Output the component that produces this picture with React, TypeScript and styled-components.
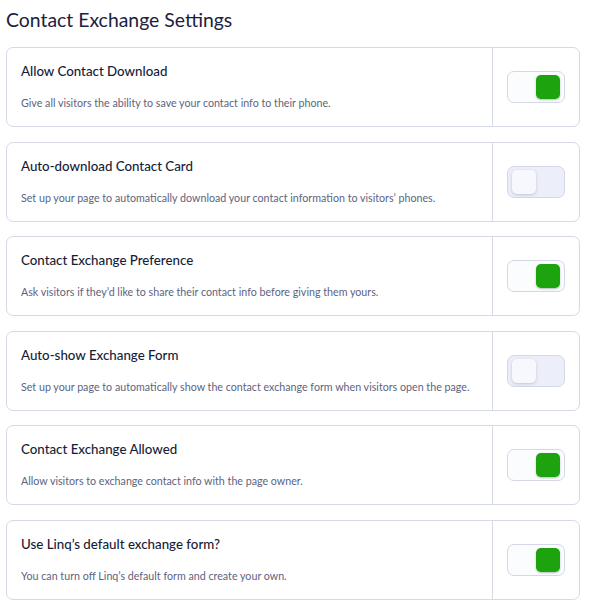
import React from 'react';
import styled, { createGlobalStyle } from 'styled-components';

const settings = [
  {
    id: 1,
    title: 'Allow Contact Download',
    description: 'Give all visitors the ability to save your contact info to their phone.',
    enabled: true,
  },
  {
    id: 2,
    title: 'Auto-download Contact Card',
    description: 'Set up your page to automatically download your contact information to visitors’ phones.',
    enabled: false,
  },
  {
    id: 3,
    title: 'Contact Exchange Preference',
    description: 'Ask visitors if they’d like to share their contact info before giving them yours.',
    enabled: true,
  },
  {
    id: 4,
    title: 'Auto-show Exchange Form',
    description: 'Set up your page to automatically show the contact exchange form when visitors open the page.',
    enabled: false,
  },
  {
    id: 5,
    title: 'Contact Exchange Allowed',
    description: 'Allow visitors to exchange contact info with the page owner.',
    enabled: true,
  },
  {
    id: 6,
    title: 'Use Linq’s default exchange form?',
    description: 'You can turn off Linq’s default form and create your own.',
    enabled: true,
  },
];

const GlobalStyle = createGlobalStyle`
  body {
    margin: 0;
    background: #ffffff;
    font-family: Lato, "Noto Sans", sans-serif;
  }
`;

const App: React.FC = () => {
  return (
    <>
      <GlobalStyle />
      <Page>
        <Heading>Contact Exchange Settings</Heading>
        <List>
          {settings.map(item => (
            <Card key={item.id}>
              <CardBody>
                <CardTitle>{item.title}</CardTitle>
                <CardText>{item.description}</CardText>
              </CardBody>
              <ToggleCell>
                <Toggle $on={item.enabled}>
                  <Thumb $on={item.enabled} />
                </Toggle>
              </ToggleCell>
            </Card>
          ))}
        </List>
      </Page>
    </>
  );
};

const Page = styled.div`
  padding: 8px 14px 0 6px;
`;

const Heading = styled.h1`
  margin: 0 0 15px;
  font-size: 19.4px;
  line-height: 24px;
  font-weight: 400;
  color: #1b2140;
`;

const List = styled.div`
  display: flex;
  flex-direction: column;
  gap: 14.6px;
`;

const Card = styled.div`
  display: flex;
  height: 80px;
  box-sizing: border-box;
  border: 1px solid #d6d9e6;
  border-radius: 7px;
  background: #fff;
`;

const CardBody = styled.div`
  flex: 1;
  padding: 15px 14px 0 14px;
  border-right: 1px solid #d6d9e6;
`;

const CardTitle = styled.div`
  font-size: 13.3px;
  line-height: 16px;
  font-weight: 500;
  color: #161c38;
`;

const CardText = styled.div`
  margin-top: 17px;
  font-size: 10.7px;
  line-height: 13px;
  color: #5d6380;
`;

const ToggleCell = styled.div`
  width: 86px;
  display: flex;
  align-items: center;
  justify-content: center;
`;

const Toggle = styled.div<{ $on: boolean }>`
  width: 58px;
  height: 32px;
  box-sizing: border-box;
  border: 1px solid #d3d7e8;
  border-radius: 7px;
  background: ${({ $on }) => ($on ? '#fbfcfe' : '#eceef9')};
  display: flex;
  align-items: center;
  justify-content: ${({ $on }) => ($on ? 'flex-end' : 'flex-start')};
  padding: 0 4px;
`;

const Thumb = styled.div<{ $on: boolean }>`
  width: 24px;
  height: 24px;
  border-radius: 5px;
  background: ${({ $on }) => ($on ? '#1ca30e' : '#f7f8fd')};
  box-shadow: ${({ $on }) =>
    $on ? '0 1px 2px rgba(0, 60, 0, 0.3)' : '0 1px 3px rgba(60, 70, 120, 0.25)'};
`;

export default App;
